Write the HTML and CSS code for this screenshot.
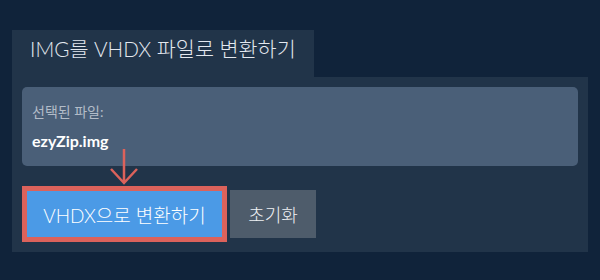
FILE: index.html
```html
<!DOCTYPE html>
<html lang="ko">
<head>
    <meta charset="UTF-8">
    <meta name="viewport" content="width=device-width, initial-scale=1.0">
    <title>IMG를 VHDX 파일로 변환하기</title>
    <link rel="stylesheet" href="styles.css">
</head>
<body>
    <main class="converter">
        <h1 class="tab">IMG를 VHDX 파일로 변환하기</h1>
        <section class="panel">
            <div class="file-box">
                <p class="file-label">선택된 파일:</p>
                <p class="file-name">ezyZip.img</p>
            </div>
            <div class="actions">
                <!-- Arrow pointing at the convert button -->
                <svg class="hint-arrow" width="30" height="38" viewBox="0 0 30 38">
                    <path d="M15 1 V35 M2 21 L15 35 L28 21" fill="none" stroke="#dc625b" stroke-width="2.5"/>
                </svg>
                <div class="convert-wrap">
                    <button class="btn btn-convert">VHDX으로 변환하기</button>
                </div>
                <button class="btn btn-reset">초기화</button>
            </div>
        </section>
    </main>
</body>
</html>
```

FILE: styles.css
```css
/* General Styles */
body {
    font-family: 'Lato', 'Noto Sans CJK KR', sans-serif;
    margin: 0;
    padding: 0;
    background-color: #10233a;
}

.converter {
    padding: 30px 12px 0;
}

/* Tab header */
.tab {
    display: inline-block;
    box-sizing: border-box;
    width: 302px;
    height: 47px;
    margin: 0;
    padding: 0 0 0 18px;
    background-color: #213449;
    color: #e3e8ef;
    font-size: 20.7px;
    font-weight: 300;
    line-height: 38px;
    vertical-align: top;
}

/* Panel */
.panel {
    background-color: #213449;
    padding: 10px;
}

.file-box {
    box-sizing: border-box;
    height: 79px;
    background-color: #4a5f78;
    border-radius: 5px;
    padding: 17px 10px 0;
}

.file-box p {
    margin: 0;
}

.file-label {
    font-size: 14px;
    line-height: 16px;
    color: #b3bcc8;
}

.file-name {
    margin-top: 11px !important;
    font-size: 16px;
    font-weight: 700;
    line-height: 20px;
    color: #ffffff;
}

/* Actions */
.actions {
    position: relative;
    display: flex;
    align-items: center;
    gap: 3px;
    margin-top: 20px;
}

.hint-arrow {
    position: absolute;
    left: 87px;
    top: -38px;
}

.convert-wrap {
    border: 5px solid #dc625b;
}

.btn {
    border: none;
    font-family: 'Lato', 'Noto Sans CJK KR', sans-serif;
    color: #ffffff;
    cursor: pointer;
    padding: 0;
}

.btn-convert {
    display: block;
    width: 195px;
    height: 46px;
    background-color: #4b9ae6;
    font-size: 19px;
    font-weight: 300;
}

.btn-reset {
    width: 86px;
    height: 48px;
    background-color: #4e5c6b;
    font-size: 18px;
    font-weight: 300;
    color: #eef1f4;
}
```
